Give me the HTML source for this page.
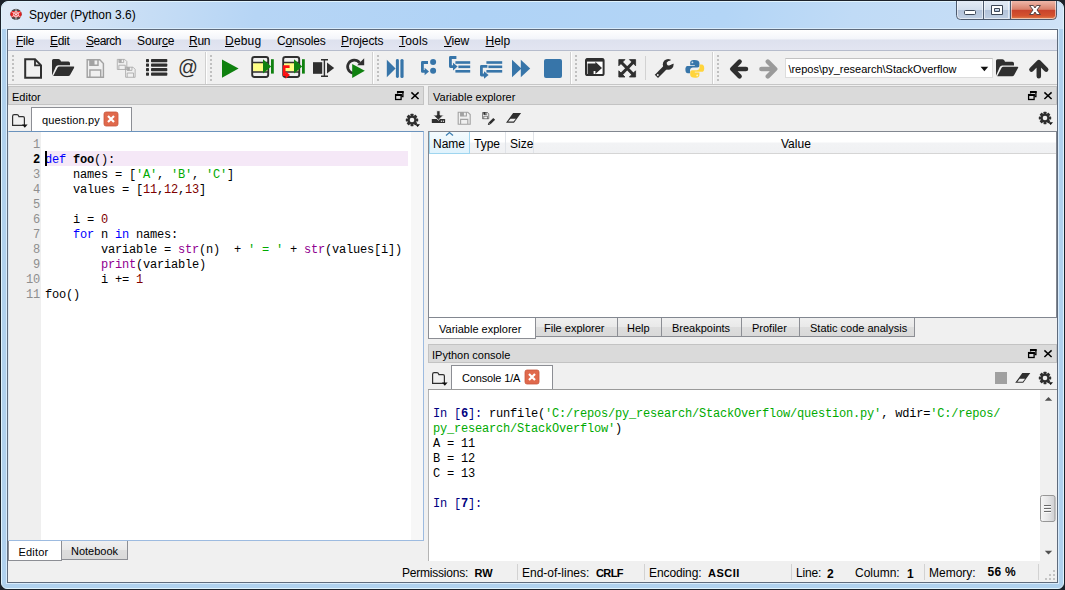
<!DOCTYPE html>
<html><head><meta charset="utf-8"><title>Spyder (Python 3.6)</title>
<style>
html,body{margin:0;padding:0;}
body{width:1065px;height:590px;overflow:hidden;background:#fff;font-family:"Liberation Sans",sans-serif;font-size:12px;color:#000;}
#win,#win div,#win span.a,#win svg{position:absolute;box-sizing:border-box;}
#win{left:0;top:0;width:1065px;height:590px;background:#1c222b;overflow:hidden;}
#glass{left:1px;top:1px;width:1063px;height:588px;border-radius:7px 7px 6px 6px;background:#b0d1ee;border:1px solid #e0f3fd;}
#tglass{left:2px;top:2px;width:1061px;height:27px;border-radius:6px 6px 0 0;background:linear-gradient(100deg,#e0ebf8 0,#d6e5f6 6%,#c8def5 13%,#b6d5f5 24%,#b0d3f6 45%,#b3d5f6 68%,#c0dbf6 80%,#c5ddf6 92%,#cfe3f7 100%);}
#ginner{left:6px;top:28px;width:1053px;height:556px;border:1px solid #d8ebfb;}
#title{left:29px;top:8px;font-size:12px;white-space:nowrap;}
#client{left:8px;top:30px;width:1049px;height:552px;background:#f0f0f0;}
#clientborder{left:7px;top:29px;width:1051px;height:554px;border:1px solid #5f6b7c;}
#menubar{left:0;top:0;width:1049px;height:21px;background:linear-gradient(#ffffff 0,#f3f5fa 45%,#dde1ee 50%,#e2e5f1 100%);border-bottom:1px solid #b6bccc;}
.mi{top:4px;font-size:12px;white-space:nowrap;}
#toolbar{left:0;top:21px;width:1049px;height:34px;background:#f0f0f0;}
.tui{font-size:11px;white-space:nowrap;}
.dock{height:19px;background:#dadada;border:1px solid #c3c3c3;}
.dock .t{left:4px;top:4px;}
.code{font-family:"Liberation Mono",monospace;font-size:12px;letter-spacing:-0.2px;line-height:15px;white-space:pre;}
.kw{color:#0000ff;}.st{color:#00aa00;}.nu{color:#800000;}.bi{color:#900090;}
.tab{background:#fff;border:1px solid #8c8e94;}
.tabi{background:linear-gradient(#f0f0f0 0,#e9e9e9 48%,#dddddd 52%,#d9d9d9 100%);border:1px solid #8c8e94;}
.sb{font-size:12px;white-space:nowrap;top:566px;}
.sbb{font-weight:bold;font-size:11px;top:567px;}
.vsep{top:564px;width:1px;height:16px;background:#d2d2d2;}
</style></head><body>
<div id="win">
<div id="glass"></div><div id="tglass"></div><div id="ginner"></div>
<div id="title">Spyder (Python 3.6)</div>
<div id="clientborder"></div>
<div id="client">
 <div id="menubar">
  <div class="mi" style="left:8px;letter-spacing:-0.3px"><u>F</u>ile</div>
  <div class="mi" style="left:42px;letter-spacing:-0.3px"><u>E</u>dit</div>
  <div class="mi" style="left:78px;letter-spacing:-0.5px"><u>S</u>earch</div>
  <div class="mi" style="left:129px;letter-spacing:-0.1px">Sour<u>c</u>e</div>
  <div class="mi" style="left:181px;letter-spacing:-0.3px"><u>R</u>un</div>
  <div class="mi" style="left:217px;letter-spacing:0.2px"><u>D</u>ebug</div>
  <div class="mi" style="left:269px;letter-spacing:-0.2px">C<u>o</u>nsoles</div>
  <div class="mi" style="left:333px;letter-spacing:-0.12px"><u>P</u>rojects</div>
  <div class="mi" style="left:391px;letter-spacing:0.2px"><u>T</u>ools</div>
  <div class="mi" style="left:436px;letter-spacing:-0.25px"><u>V</u>iew</div>
  <div class="mi" style="left:477.5px"><u>H</u>elp</div>
 </div>
 <div id="toolbar">
 
<svg id="tbsvg" style="left:0;top:0;" width="1049" height="34" viewBox="8 51 1049 34">
<defs>
 <g id="hdl"><path d="M1 0h2v2h-2zM1 4h2v2h-2zM1 8h2v2h-2zM1 12h2v2h-2zM1 16h2v2h-2zM1 20h2v2h-2zM1 24h2v2h-2z" fill="#c0c0c0"/><path d="M0 1h1v2h1v-1M0 5h1v2M0 9h1v2M0 13h1v2M0 17h1v2M0 21h1v2M0 25h1v2" fill="none"/></g>
 <g id="floppy"><path d="M0 0H14L18 4V19H0Z M3 0V6H12V0 M3 19V11H15V19" fill="none" stroke-width="1.6"/><rect x="3.6" y="0.6" width="4" height="5"/></g>
 <g id="folder"><path d="M0 16.5V1.6Q0 0 1.6 0H6.5Q8 0 8.6 1.6L9 2.6H16.4Q18 2.6 18 4.2V6.2H6.2Q4.6 6.2 3.8 7.8Z"/><path d="M1.2 17 5.6 8.6Q6.2 7.6 7.4 7.6H21.4Q22.8 7.6 22 8.9L18.2 15.8Q17.5 17 16.2 17Z"/></g>
</defs>
<!-- handles -->
<use href="#hdl" x="11" y="55"/><use href="#hdl" x="209" y="55"/><use href="#hdl" x="376" y="55"/><use href="#hdl" x="574" y="55"/><use href="#hdl" x="716" y="55"/>
<g fill="#d0d0d0">
 <rect x="205" y="52" width="1" height="33"/><rect x="372" y="52" width="1" height="33"/><rect x="570" y="52" width="1" height="33"/><rect x="712" y="52" width="1" height="33"/>
 <rect x="645" y="56" width="1" height="24" fill="#d2d2d2"/>
</g>
<g fill="#fff">
 <rect x="206" y="52" width="1" height="33"/><rect x="373" y="52" width="1" height="33"/><rect x="571" y="52" width="1" height="33"/><rect x="713" y="52" width="1" height="33"/>
</g>
<rect x="8" y="84" width="1049" height="1" fill="#c6c6c6"/>
<!-- new file -->
<path d="M25.2 59.3H35L41 65.3V77.7H25.2Z" fill="none" stroke="#2f2f2f" stroke-width="2" stroke-linejoin="miter"/>
<path d="M35 59.3V65.3H41" fill="none" stroke="#2f2f2f" stroke-width="1.8"/>
<!-- open folder -->
<use href="#folder" x="52" y="59" fill="#2f2f2f"/>
<!-- save (disabled) -->
<use href="#floppy" transform="translate(87.2 59.8) scale(0.9 0.92)" stroke="#a2a2a2" fill="#a2a2a2"/>
<!-- save all (disabled) -->
<g stroke="#a8a8a8" fill="#a8a8a8"><use href="#floppy" transform="translate(117.3 59.4) scale(0.53)"/><use href="#floppy" transform="translate(125.6 67.2) scale(0.53)"/></g>
<!-- list -->
<g fill="#2f2f2f">
 <rect x="146" y="59" width="3" height="3.2" rx="0.6"/><rect x="151" y="59" width="16.3" height="3.2" rx="0.8"/>
 <rect x="146" y="63.5" width="3" height="3.2" rx="0.6"/><rect x="151" y="63.5" width="16.3" height="3.2" rx="0.8"/>
 <rect x="146" y="68" width="3" height="3.2" rx="0.6"/><rect x="151" y="68" width="16.3" height="3.2" rx="0.8"/>
 <rect x="146" y="72.5" width="3" height="3.2" rx="0.6"/><rect x="151" y="72.5" width="16.3" height="3.2" rx="0.8"/>
</g>
<!-- @ -->
<text x="178" y="74" font-family="Liberation Sans, sans-serif" font-size="19.6" fill="#2f2f2f">@</text>
<!-- run -->
<path d="M222 59.5 238.6 68.5 222 77.7Z" fill="#0f810f"/>
<!-- run cell -->
<g>
 <rect x="252.2" y="57" width="16" height="20" rx="2.2" fill="none" stroke="#2f2f2f" stroke-width="1.9"/>
 <rect x="253.2" y="63" width="14" height="8.6" fill="#ffff85"/>
 <path d="M252 62.4H268.4M252 72.1H268.4" stroke="#2f2f2f" stroke-width="1.5"/>
 <path d="M263 59.3 271.2 66.4 263 73.5Z" fill="#0f810f"/><rect x="271" y="59.2" width="2.8" height="14.4" fill="#0f810f"/>
</g>
<!-- run cell & advance -->
<g>
 <rect x="283.2" y="57" width="16" height="20" rx="2.2" fill="none" stroke="#2f2f2f" stroke-width="1.9"/>
 <rect x="284.2" y="63" width="14" height="8.6" fill="#ffff85"/>
 <path d="M283 62.4H299.4M283 72.1H299.4" stroke="#2f2f2f" stroke-width="1.5"/>
 <path d="M294 59.3 302.2 66.4 294 73.5Z" fill="#0f810f"/><rect x="302" y="59.2" width="2.8" height="14.4" fill="#0f810f"/>
 <path d="M289.6 66.6H284.2V74.6H286" fill="none" stroke="#ff1010" stroke-width="2.6"/>
 <path d="M285.4 71.2 290 75 285.6 78.8Z" fill="#ff1010"/>
</g>
<!-- run selection -->
<g fill="#2f2f2f">
 <rect x="313" y="62.2" width="9.2" height="11.6"/>
 <path d="M327 62.6 334.2 68 327 73.5Z"/>
 <path d="M321 59.8H328M321 76.2H328M324.4 59.8V76.2" stroke="#2f2f2f" stroke-width="1.4" fill="none"/>
</g>
<!-- re-run -->
<g>
 <path d="M352.9 73.2A6.6 6.6 0 1 1 359.6 62.9" fill="none" stroke="#2f2f2f" stroke-width="2.7"/>
 <path d="M357.2 65.2 364.2 58.2V65.2Z" fill="#2f2f2f"/>
 <path d="M352.2 64 364.8 70.8 352.2 78Z" fill="#0f810f"/>
</g>
<!-- debug -->
<g fill="#3775a9">
 <path d="M386.8 59.8 395.6 68.5 386.8 77.3Z"/>
 <rect x="395.9" y="59" width="3" height="19" rx="1.4"/><rect x="400.4" y="59" width="3.2" height="19" rx="1.5"/>
</g>
<!-- step -->
<g fill="#3775a9">
 <path d="M428 62.5H422.4V71.4H425" fill="none" stroke="#3775a9" stroke-width="2.8" stroke-linejoin="round"/>
 <path d="M424.6 67.8 429 71.5 424.6 75.2Z"/>
 <circle cx="433.1" cy="62.1" r="3"/><circle cx="433.1" cy="70.8" r="3"/>
</g>
<!-- step into -->
<g fill="#3775a9">
 <path d="M456.4 57.5H450.4V66.6H453.4" fill="none" stroke="#3775a9" stroke-width="2.8" stroke-linejoin="round"/>
 <path d="M453 62.8 457.6 66.6 453 70.4Z"/>
 <rect x="455.4" y="61.2" width="14.8" height="2.6"/><rect x="458.4" y="65.5" width="11.8" height="2.6"/><rect x="455.4" y="70" width="14.8" height="2.6"/>
</g>
<!-- step return -->
<g fill="#3775a9">
 <path d="M487.4 66.4H481.4V75H484.4" fill="none" stroke="#3775a9" stroke-width="2.8" stroke-linejoin="round"/>
 <path d="M484 71.2 488.6 75 484 78.8Z"/>
 <rect x="486.4" y="61.2" width="15.8" height="2.6"/><rect x="488.4" y="65.5" width="13.8" height="2.6"/><rect x="486.4" y="70" width="15.8" height="2.6"/>
</g>
<!-- continue -->
<g fill="#3775a9"><path d="M512 59.8 521.4 68.5 512 77.3Z"/><path d="M520.8 59.8 530.2 68.5 520.8 77.3Z"/></g>
<!-- stop -->
<rect x="544" y="59" width="18" height="19" rx="2" fill="#3775a9"/>
<!-- maximize pane -->
<g>
 <rect x="586" y="59" width="17.6" height="16" rx="1.6" fill="#fff" stroke="#2f2f2f" stroke-width="2"/>
 <rect x="586" y="58.6" width="17.6" height="3" fill="#2f2f2f"/>
 <path d="M587.6 63.6H595.4V61.8L602 68 595.4 74V71H593.6V74.6H587.6Z" fill="#2f2f2f"/>
</g>
<!-- fullscreen -->
<g fill="#2f2f2f" stroke="#2f2f2f">
 <path d="M621 62 633.4 74.6M633.4 62 621 74.6" stroke-width="3" fill="none"/>
 <path d="M618.8 59.6H625L618.8 65.8ZM635.6 59.6H629.4L635.6 65.8ZM618.8 77H625L618.8 70.8ZM635.6 77H629.4L635.6 70.8Z" stroke-width="0.8" stroke-linejoin="round"/>
</g>
<!-- wrench -->
<g>
 <path d="M658 74.800 666.200 66.600" stroke="#2f2f2f" stroke-width="4.600" stroke-linecap="square" fill="none"/>
 <circle cx="668.200" cy="64.400" r="5.400" fill="#2f2f2f"/>
 <g transform="translate(668.800 63.400) rotate(-24)"><rect x="0" y="-2.100" width="9" height="4.200" fill="#f0f0f0"/><circle cx="0" cy="0" r="2.100" fill="#f0f0f0"/></g>
 <circle cx="657.800" cy="75" r="0.900" fill="#f0f0f0"/>
</g>
<!-- python -->
<g>
 <path d="M694.6 60C690.6 60 690.2 61.6 690.2 63V65.2H694.8V66H687.6C685.6 66 685.4 68.6 685.4 69.4C685.4 71.4 686 73.2 688 73.2H690V70.6C690 68.8 691.4 67.6 693 67.6H697.4C698.8 67.6 699.4 66.6 699.4 65.6V63C699.4 61 697.6 60 694.6 60Z" fill="#3775a9"/>
 <path d="M695 77.8C699 77.8 699.4 76.2 699.4 74.8V72.6H694.8V71.8H702C704 71.8 704.2 69.2 704.2 68.4C704.2 66.4 703.6 64.6 701.6 64.6H699.6V67.2C699.6 69 698.2 70.2 696.6 70.2H692.2C690.8 70.2 690.2 71.2 690.2 72.2V74.8C690.2 76.8 692 77.8 695 77.8Z" fill="#ffd43b"/>
 <circle cx="692.4" cy="62.4" r="0.9" fill="#cfe0ee"/><circle cx="697.2" cy="75.4" r="0.9" fill="#fff3c4"/>
</g>
<!-- back / forward -->
<path d="M746 69H733.4M739.6 61.6 732.2 69 739.6 76.4" fill="none" stroke="#2f2f2f" stroke-width="4.5" stroke-linecap="round" stroke-linejoin="round"/>
<path d="M761.4 69H774M767.8 61.6 775.2 69 767.8 76.4" fill="none" stroke="#9a9a9a" stroke-width="4.5" stroke-linecap="round" stroke-linejoin="round"/>
<!-- combobox -->
<rect x="785.5" y="58.5" width="207" height="19" fill="#fff" stroke="#dcdcdc"/>
<path d="M785.5 58.5H992.5" stroke="#c2c2c2"/>
<text x="788.4" y="72.6" font-family="Liberation Sans, sans-serif" font-size="11" fill="#000">\repos\py_research\StackOverflow</text>
<path d="M980.6 66.8H988.2L984.4 71.2Z" fill="#111"/>
<!-- folder -->
<use href="#folder" x="996" y="59.2" fill="#2f2f2f"/>
<!-- up -->
<path d="M1038.8 76.2V63.6M1031.4 69.6 1038.8 62.2 1046.2 69.6" fill="none" stroke="#2f2f2f" stroke-width="4.5" stroke-linecap="round" stroke-linejoin="round"/>
</svg>

 </div>
</div>

<!-- ===== Editor dock (absolute page coords) ===== -->
<div class="dock" style="left:8px;top:86px;width:416px;"><div class="t tui" style="left:3px">Editor</div></div>
<!-- editor tab bar -->
<div class="tab" style="left:31px;top:107px;width:101px;height:25px;border-bottom:none;border-color:#8c8e94;"></div>
<div class="tui" style="left:42px;top:114px;letter-spacing:0.15px">question.py</div>
<!-- editor frame -->
<div style="left:8px;top:131px;width:416px;height:410px;background:#fff;border:1px solid #9dbbe0;border-top-color:#6b93bd;border-left-color:#dbe7f3;"></div>
<div style="left:9px;top:132px;width:32px;height:408px;background:#efefef;"></div>
<div style="left:411px;top:132px;width:12px;height:408px;background:#f7f7f7;"></div>
<div style="left:45px;top:151px;width:363px;height:15px;background:#f5e8f7;"></div>
<div class="code" style="left:9px;top:138px;width:31px;text-align:right;color:#8e8e8e;">1
<span style="color:#000;font-weight:bold">2</span>
3
4
5
6
7
8
9
10
11</div>
<div class="code" style="left:45px;top:138px;">
<span class="kw">def</span> <b>foo</b>():
    names = [<span class="st">'A'</span>, <span class="st">'B'</span>, <span class="st">'C'</span>]
    values = [<span class="nu">11</span>,<span class="nu">12</span>,<span class="nu">13</span>]

    i = <span class="nu">0</span>
    <span class="kw">for</span> n <span class="kw">in</span> names:
        variable = <span class="bi">str</span>(n)  + <span class="st">' = '</span> + <span class="bi">str</span>(values[i])
        <span class="bi">print</span>(variable)
        i += <span class="nu">1</span>
foo()</div>
<div style="left:45px;top:151px;width:2px;height:15px;background:#000;"></div>
<!-- bottom tabs -->
<div class="tabi" style="left:59px;top:541px;width:69px;height:19px;border-top:none;"></div>
<div class="tui" style="left:71px;top:545px;">Notebook</div>
<div class="tab" style="left:8px;top:541px;width:54px;height:20px;border-top:none;"></div>
<div class="tui" style="left:18.500px;top:546px;letter-spacing:0.2px">Editor</div>

<!-- ===== Variable explorer dock ===== -->
<div class="dock" style="left:428px;top:86px;width:629px;"><div class="t tui">Variable explorer</div></div>
<div style="left:428px;top:131px;width:629px;height:187px;background:#fff;border:1px solid #828790;"></div>
<div style="left:429px;top:132px;width:627px;height:22px;background:linear-gradient(#fff 0,#fff 45%,#f2f3f5 55%,#f0f1f3 100%);border-bottom:1px solid #d5d5d5;"></div>
<div style="left:429px;top:132px;width:41px;height:22px;background:linear-gradient(#f4fbfe,#dff2fc);border:1px solid #9fd5ef;border-top:none;"></div>
<div style="left:505px;top:132px;width:1px;height:21px;background:#e0e3e8;"></div>
<div style="left:533px;top:132px;width:1px;height:21px;background:#e0e3e8;"></div>
<div class="tui" style="left:433px;top:137px;font-size:12px;">Name</div>
<div class="tui" style="left:474px;top:137px;font-size:12px;">Type</div>
<div class="tui" style="left:510px;top:137px;font-size:12px;">Size</div>
<div class="tui" style="left:781px;top:137px;font-size:12px;">Value</div>
<!-- VE bottom tabs -->
<div class="tabi" style="left:533px;top:318px;width:85px;height:19px;border-top:none;"></div>
<div class="tui" style="left:544px;top:322px;">File explorer</div>
<div class="tabi" style="left:617px;top:318px;width:45px;height:19px;border-top:none;"></div>
<div class="tui" style="left:627px;top:322px;">Help</div>
<div class="tabi" style="left:661px;top:318px;width:81px;height:19px;border-top:none;"></div>
<div class="tui" style="left:672px;top:322px;">Breakpoints</div>
<div class="tabi" style="left:741px;top:318px;width:59px;height:19px;border-top:none;"></div>
<div class="tui" style="left:752px;top:322px;">Profiler</div>
<div class="tabi" style="left:799px;top:318px;width:116px;height:19px;border-top:none;"></div>
<div class="tui" style="left:810px;top:322px;">Static code analysis</div>
<div class="tab" style="left:428px;top:318px;width:108px;height:21px;border-top:none;"></div>
<div class="tui" style="left:439px;top:323px;">Variable explorer</div>

<!-- ===== IPython console dock ===== -->
<div class="dock" style="left:428px;top:344px;width:629px;"><div class="t tui" style="left:3px">IPython console</div></div>
<div class="tab" style="left:451px;top:365px;width:102px;height:25px;border-bottom:none;"></div>
<div class="tui" style="left:462px;top:372px;letter-spacing:-0.15px">Console 1/A</div>
<div style="left:428px;top:389px;width:629px;height:1px;background:#9a9a9a;"></div>
<div style="left:428px;top:390px;width:628px;height:171px;background:#fff;border-left:1px solid #b4b4b4;"></div>
<div class="code" style="left:433px;top:407px;"><span style="color:#000080">In [<b>6</b>]:</span> runfile(<span class="st">'C:/repos/py_research/StackOverflow/question.py'</span>, wdir=<span class="st">'C:/repos/</span>
<span class="st">py_research/StackOverflow'</span>)
A = 11
B = 12
C = 13

<span style="color:#000080">In [<b>7</b>]:</span></div>
<!-- console scrollbar -->
<div style="left:1040px;top:390px;width:16px;height:171px;background:#f0f0f0;"></div>

<!-- ===== Status bar ===== -->
<div class="sb" style="left:402px;letter-spacing:-0.22px">Permissions:</div><div class="sb sbb" style="left:474.500px;">RW</div>
<div class="sb" style="left:522px;">End-of-lines:</div><div class="sb sbb" style="left:596px;letter-spacing:-0.6px">CRLF</div>
<div class="sb" style="left:649px;letter-spacing:-0.1px">Encoding:</div><div class="sb sbb" style="left:708px;letter-spacing:0.5px">ASCII</div>
<div class="sb" style="left:796px;letter-spacing:-0.2px">Line:</div><div class="sb sbb" style="left:827px;font-size:12px">2</div>
<div class="sb" style="left:855px;">Column:</div><div class="sb sbb" style="left:907px;font-size:12px">1</div>
<div class="sb" style="left:929px;">Memory:</div><div class="sb sbb" style="left:987.500px;top:565px;font-size:12px;letter-spacing:0.3px">56 %</div>
<div class="vsep" style="left:517px"></div><div class="vsep" style="left:644px"></div><div class="vsep" style="left:791px"></div><div class="vsep" style="left:924px"></div><div class="vsep" style="left:1038px"></div>
<svg id="ov" style="left:0;top:0;pointer-events:none" width="1065" height="590" viewBox="0 0 1065 590">
<defs>
 <g id="gear">
  <g fill="#2f2f2f">
   <circle cx="0" cy="0" r="4.3"/>
   <rect x="-1.5" y="-6.2" width="3" height="12.4" rx="0.4"/><rect x="-1.5" y="-6.2" width="3" height="12.4" rx="0.4" transform="rotate(45)"/><rect x="-1.5" y="-6.2" width="3" height="12.4" rx="0.4" transform="rotate(90)"/><rect x="-1.5" y="-6.2" width="3" height="12.4" rx="0.4" transform="rotate(135)"/>
  </g>
  <circle cx="0" cy="0" r="2.3" fill="#f0f0f0"/>
  <path d="M3.2 4.2H8L5.6 6.9Z" fill="#111"/>
 </g>
 <g id="float" fill="none" stroke="#000">
  <path d="M2.6 2.6V1H7.9V5.5H6.6" stroke-width="1.3"/><path d="M2 1H8.6" stroke-width="2"/>
  <rect x="0.6" y="3.6" width="5.5" height="4.9" stroke-width="1.3"/><path d="M0 4H6.8" stroke-width="2"/>
 </g>
 <path id="cx" d="M0.4 0.4 7.6 7M7.6 0.4 0.4 7" stroke="#000" stroke-width="1.5" fill="none"/>
 <g id="tabclose"><rect x="0" y="0" width="14" height="14" rx="2" fill="#e0694c" stroke="#c9573e" stroke-width="0.8"/><path d="M4 4 10 10M10 4 4 10" stroke="#fff" stroke-width="2.2" fill="none"/></g>
 <g id="browse"><path d="M0.6 11.4V2.2Q0.6 0.6 2.2 0.6H5Q6.2 0.6 6.6 1.8L6.9 2.6H11Q12.4 2.6 12.4 4V11.4Z" fill="none" stroke="#2f2f2f" stroke-width="1.2"/><path d="M10 10.400H15.600L12.800 13.800Z" fill="#111"/></g>
 <g id="sfloppy"><path d="M0 0H9.6L12 2.4V12H0Z M2.4 0V3.8H8.2V0 M2.4 12V7.2H9.6V12" fill="none" stroke-width="1.1"/><rect x="2.8" y="0.4" width="2.4" height="3"/></g>
 <path id="eraser" d="M7.1 0H15.1L8 9.7H0Z M4.5 5.7H9.9L7.5 8.6H2.2Z" fill-rule="evenodd"/>
</defs>

<!-- caption buttons -->
<g>
 <defs>
  <linearGradient id="cbg" x1="0" y1="0" x2="0" y2="1"><stop offset="0" stop-color="#e4ecf6"/><stop offset="0.48" stop-color="#d3deed"/><stop offset="0.5" stop-color="#b3c3da"/><stop offset="1" stop-color="#c0cfe3"/></linearGradient>
  <linearGradient id="cred" x1="0" y1="0" x2="0" y2="1"><stop offset="0" stop-color="#eeb7a9"/><stop offset="0.45" stop-color="#d9816c"/><stop offset="0.5" stop-color="#c8432b"/><stop offset="0.8" stop-color="#d4522f"/><stop offset="1" stop-color="#e28a55"/></linearGradient>
 </defs>
 <path d="M956.5 1V15.5Q956.5 19.5 960.5 19.5H1009.5V1Z" fill="url(#cbg)"/>
 <path d="M1010 1V19.5H1052.5Q1056.5 19.5 1056.5 15.5V1Z" fill="url(#cred)"/>
 <path d="M956.5 1V15.5Q956.5 19.5 960.5 19.5H1052.5Q1056.5 19.5 1056.5 15.5V1" fill="none" stroke="#4d5a6e" stroke-width="1"/>
 <path d="M957.5 1V15.5Q957.5 18.5 960.5 18.5H982.5V1M984.5 1V18.5H1008.5V1M1011.5 1V18.5H1052.5Q1055.5 18.5 1055.5 15.5V1" fill="none" stroke="#fff" stroke-opacity="0.55" stroke-width="1"/>
 <path d="M983.5 1V19M1010.5 1V19" stroke="#4d5a6e" stroke-width="1"/>
 <rect x="964.5" y="10.5" width="11" height="4" rx="1" fill="#fff" stroke="#3d4757"/>
 <path d="M991.5 5.500H1002.500V14.500H991.500ZM994.500 8.500V11.500H999.500V8.500Z" fill="#fff" stroke="#3d4757" fill-rule="evenodd"/>
 <path d="M1029.600 5.500H1033.400L1035 8 1036.600 5.500H1040.400L1037 10 1040.400 14.500H1036.600L1035 12 1033.400 14.500H1029.600L1033 10Z" fill="#fff" stroke="#4a3a3a" stroke-width="0.9"/>
</g>
<!-- app icon -->
<g>
 <circle cx="16" cy="14.300" r="5.600" fill="#4a4a4a"/>
 <path d="M10.400 14.300A5.600 5.600 0 0 1 11.600 10.900L20.400 10.900A5.600 5.600 0 0 1 21.600 14.300A5.600 5.600 0 0 1 20.400 17.300L11.600 17.300A5.600 5.600 0 0 1 10.400 14.300Z" fill="#e02020"/>
 <circle cx="16" cy="14.300" r="2.600" fill="none" stroke="#fff" stroke-width="0.8" stroke-opacity="0.85"/>
 <path d="M16 8.700V19.900M11.200 11.500 20.800 17.100M20.800 11.500 11.200 17.100" stroke="#fff" stroke-width="0.8" stroke-opacity="0.85"/>
</g>
<!-- dock buttons -->
<use href="#float" x="395" y="91"/><use href="#cx" x="411" y="92"/>
<use href="#float" x="1028" y="91"/><use href="#cx" x="1044" y="92"/>
<use href="#float" x="1028" y="349"/><use href="#cx" x="1044" y="350"/>
<!-- gears -->
<use href="#gear" x="412" y="120"/>
<use href="#gear" x="1045" y="118"/>
<use href="#gear" x="1045" y="378"/>
<!-- tab things -->
<use href="#browse" x="12" y="114"/>
<use href="#tabclose" x="104" y="112"/>
<use href="#browse" x="432" y="372"/>
<use href="#tabclose" x="525" y="370"/>
<!-- variable explorer toolbar -->
<g fill="#2f2f2f">
 <rect x="431.8" y="119" width="13.3" height="4" rx="0.6"/>
 <path d="M436.7 110.700H440.100V115H443.600L438.400 120.200 433.200 115H436.700Z" stroke="#f0f0f0" stroke-width="0.900"/>
 <rect x="440.800" y="120.600" width="1.200" height="1.200" fill="#f0f0f0"/><rect x="442.800" y="120.600" width="1.200" height="1.200" fill="#f0f0f0"/>
</g>
<use href="#sfloppy" x="458.2" y="112.2" stroke="#a2a2a2" fill="#a2a2a2"/>
<g stroke="#2f2f2f" fill="#2f2f2f"><use href="#sfloppy" transform="translate(482.500 112.500) scale(0.520)"/></g>
<path d="M494.200 118.800 489.600 123.400" stroke="#2f2f2f" stroke-width="2.6" fill="none"/><path d="M487.800 125 488.500 122.600 490.400 124.500Z" fill="#2f2f2f"/>
<use href="#eraser" x="506" y="113" fill="#2f2f2f"/>
<!-- sort arrow -->
<path d="M446 135.6 449.5 132.6 453 135.6" fill="none" stroke="#3c7fb1" stroke-width="1.3"/>
<!-- console toolbar -->
<rect x="995" y="372" width="12" height="12" fill="#a0a0a0"/>
<use href="#eraser" x="1015.2" y="373.1" fill="#2f2f2f"/>
<!-- scrollbar arrows & thumb -->
<path d="M1044.8 400.8 1048.5 397 1052.2 400.800Z" fill="#505050"/>
<path d="M1044.8 550.800 1048.5 554.600 1052.2 550.800Z" fill="#505050"/>
<defs><linearGradient id="thg" x1="0" y1="0" x2="1" y2="0"><stop offset="0" stop-color="#f6f6f6"/><stop offset="0.5" stop-color="#e6e6e7"/><stop offset="1" stop-color="#cfcfd2"/></linearGradient></defs><rect x="1040.5" y="495.5" width="14.5" height="26" rx="2" fill="url(#thg)" stroke="#979797"/>
<path d="M1044 505.5H1051M1044 508.5H1051M1044 511.5H1051" stroke="#6a6a6a"/><path d="M1044 506.5H1051M1044 509.5H1051M1044 512.5H1051" stroke="#fafafa"/>
<!-- size grip -->
<g fill="#c4c4c4"><rect x="1053" y="574" width="2" height="2"/><rect x="1053" y="578" width="2" height="2"/><rect x="1049" y="578" width="2" height="2"/><rect x="1053" y="570" width="2" height="2"/><rect x="1049" y="574" width="2" height="2"/><rect x="1045" y="578" width="2" height="2"/></g>
</svg>
</div>
</body></html>
